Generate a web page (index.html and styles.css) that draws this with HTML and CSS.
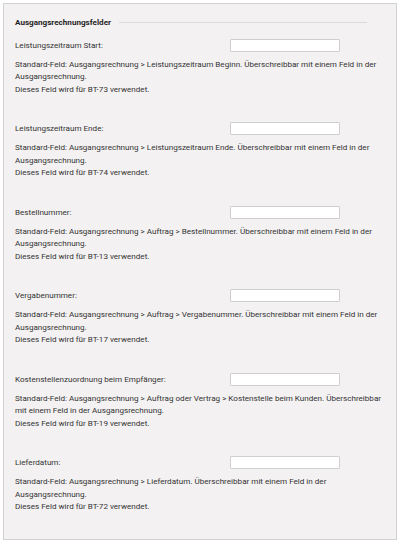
FILE: index.html
```html
<!DOCTYPE html>
<html lang="de">
<head>
<meta charset="utf-8">
<link rel="stylesheet" href="styles.css">
</head>
<body>
<div class="panel">
  <div class="title-row"><span class="title">Ausgangsrechnungsfelder</span><span class="rule"></span></div>

  <div class="field">
    <div class="row"><label>Leistungszeitraum Start:</label><input type="text"></div>
    <div class="desc">Standard-Feld: Ausgangsrechnung &gt; Leistungszeitraum Beginn. Überschreibbar mit einem Feld in der Ausgangsrechnung.<br>Dieses Feld wird für BT-73 verwendet.</div>
  </div>

  <div class="field">
    <div class="row"><label>Leistungszeitraum Ende:</label><input type="text"></div>
    <div class="desc">Standard-Feld: Ausgangsrechnung &gt; Leistungszeitraum Ende. Überschreibbar mit einem Feld in der Ausgangsrechnung.<br>Dieses Feld wird für BT-74 verwendet.</div>
  </div>

  <div class="field">
    <div class="row"><label>Bestellnummer:</label><input type="text"></div>
    <div class="desc">Standard-Feld: Ausgangsrechnung &gt; Auftrag &gt; Bestellnummer. Überschreibbar mit einem Feld in der Ausgangsrechnung.<br>Dieses Feld wird für BT-13 verwendet.</div>
  </div>

  <div class="field">
    <div class="row"><label>Vergabenummer:</label><input type="text"></div>
    <div class="desc">Standard-Feld: Ausgangsrechnung &gt; Auftrag &gt; Vergabenummer. Überschreibbar mit einem Feld in der Ausgangsrechnung.<br>Dieses Feld wird für BT-17 verwendet.</div>
  </div>

  <div class="field">
    <div class="row"><label>Kostenstellenzuordnung beim Empfänger:</label><input type="text"></div>
    <div class="desc">Standard-Feld: Ausgangsrechnung &gt; Auftrag oder Vertrag &gt; Kostenstelle beim Kunden. Überschreibbar mit einem Feld in der Ausgangsrechnung.<br>Dieses Feld wird für BT-19 verwendet.</div>
  </div>

  <div class="field">
    <div class="row"><label>Lieferdatum:</label><input type="text"></div>
    <div class="desc">Standard-Feld: Ausgangsrechnung &gt; Lieferdatum. Überschreibbar mit einem Feld in der Ausgangsrechnung.<br>Dieses Feld wird für BT-72 verwendet.</div>
  </div>
</div>
</body>
</html>
```

FILE: styles.css
```css
html, body {
  margin: 0;
  padding: 0;
  background: #ffffff;
}

body {
  font-family: Roboto, "Noto Sans", sans-serif;
  font-size: 8.1px;
  color: #333333;
}

.panel {
  margin: 3px;
  box-sizing: border-box;
  width: 394px;
  border: 1px solid #d2d0d1;
  background: #f3f1f2;
  padding: 12px 14px 26px 11px;
}

.title-row {
  display: flex;
  align-items: center;
  height: 13px;
  margin-right: 15px;
  margin-bottom: 9.5px;
}

.title {
  font-weight: bold;
  color: #1f1f1f;
  line-height: 13px;
}

.rule {
  flex: 1;
  height: 1px;
  background: #dcdadb;
  margin-left: 8px;
}

.field {
  margin-bottom: 27px;
}

.field:last-child {
  margin-bottom: 0;
}

.row {
  display: grid;
  grid-template-columns: 215px 110px;
  align-items: center;
  height: 13px;
}

.row label {
  line-height: 13px;
  white-space: nowrap;
}

.row input {
  box-sizing: border-box;
  width: 110px;
  height: 13px;
  margin: 0;
  padding: 0 2px;
  border: 1px solid #cfcfcf;
  border-radius: 1px;
  background: #ffffff;
  font: inherit;
}

.desc {
  margin-top: 6px;
  line-height: 12.5px;
}
```
